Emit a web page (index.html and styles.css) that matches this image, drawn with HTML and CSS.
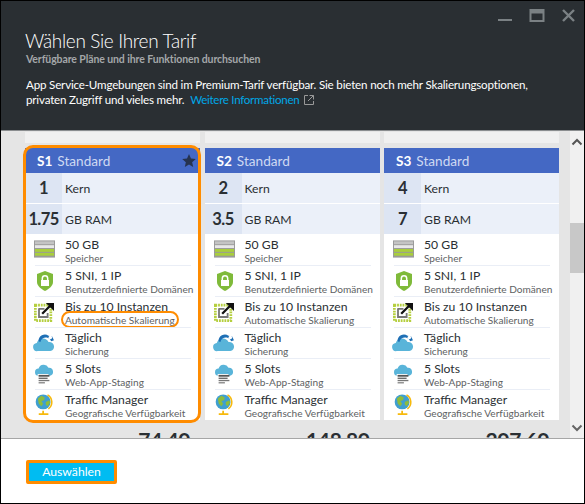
FILE: index.html
```html
<!DOCTYPE html>
<html lang="de">
<head>
<meta charset="utf-8">
<title>Wählen Sie Ihren Tarif</title>
<link rel="stylesheet" href="styles.css">
</head>
<body>
<svg class="defs" width="0" height="0" aria-hidden="true">
  <symbol id="i-disk" viewBox="0 0 22 18">
    <rect width="22" height="18" fill="#9a9a9a"/>
    <rect x="1" y="1" width="20" height="3" fill="#c4c4c4"/>
    <rect x="1" y="5" width="20" height="3" fill="#e8e8e8"/>
    <rect x="1" y="9" width="20" height="3" fill="#a9ce3c"/>
    <rect x="1" y="13" width="20" height="3" fill="#a9ce3c"/>
  </symbol>
  <symbol id="i-shield" viewBox="0 0 18 20">
    <path d="M9 0l8 3v8c0 4-4 7-8 9-4-2-8-5-8-9V3z" fill="#7fba3a"/>
    <path d="M6.300 9V7.500a2.700 2.700 0 0 1 5.400 0V9" fill="none" stroke="#fff" stroke-width="1.500"/>
    <rect x="5" y="9" width="8" height="6" fill="#fff"/>
  </symbol>
  <symbol id="i-scale" viewBox="0 0 22 22">
    <rect x="1.500" y="3.500" width="17" height="17" fill="none" stroke="#b5cf3f" stroke-width="3" stroke-dasharray="2 1"/>
    <path d="M5.500 7.500h6M5.500 7v9.500h9.500V12" fill="none" stroke="#777" stroke-width="2"/>
    <path d="M9 13L20 2" stroke="#111" stroke-width="2.500"/>
    <path d="M13 1h9v9z" fill="#111"/>
  </symbol>
  <symbol id="i-backup" viewBox="0 0 24 21">
    <path d="M5 20a4.500 4.500 0 0 1-1-9 7 7 0 0 1 13-1 5 5 0 0 1 2 10z" fill="#59b4d9"/>
    <path d="M6 9a7 7 0 0 1 11-6l4 1 2 4-3 1-2-3-3-1a6 6 0 0 0-7 5z" fill="#1e6fb5"/>
    <circle cx="19" cy="5" r="2" fill="#fff"/>
  </symbol>
  <symbol id="i-slots" viewBox="0 0 20 22">
    <path d="M4 13a4 4 0 0 1 0-8 6 6 0 0 1 11-1 4.500 4.500 0 0 1 1 9z" fill="#59b4d9"/>
    <rect x="3" y="11" width="12" height="2" fill="#fff"/>
    <rect x="4" y="12" width="12" height="2" fill="#555"/>
    <rect x="4" y="15" width="10" height="1.500" fill="#666"/>
    <rect x="4" y="17.500" width="12" height="1.500" fill="#777"/>
    <rect x="4" y="20" width="7" height="1.500" fill="#888"/>
  </symbol>
  <symbol id="i-globe" viewBox="0 0 20 24">
    <circle cx="9" cy="9" r="8.500" fill="#3f9fd0"/>
    <path d="M3 5l4-3 4 2-1 3-3 1 2 3-2 3-3-3zM12 9l4-2 1 3-3 4-2-2z" fill="#8dbb3e"/>
    <path d="M14 1a9.500 9.500 0 0 1 1 16" fill="none" stroke="#f7b90c" stroke-width="1.800"/>
    <path d="M9 19v3M4 23h11" stroke="#f7b90c" stroke-width="2"/>
  </symbol>
</svg>
<main class="window">
  <header class="head">
    <div class="controls">
      <svg class="ctl" width="78" height="14" viewBox="0 0 78 14" aria-hidden="true">
        <path d="M0 11h14" stroke="#7b8184" stroke-width="2"/>
        <path d="M32.500 1h13v11h-13z" fill="none" stroke="#7b8184" stroke-width="2"/>
        <path d="M32 3h14" stroke="#7b8184" stroke-width="3"/>
        <path d="M65 1l11 11M76 1L65 12" stroke="#7b8184" stroke-width="2.400"/>
      </svg>
    </div>
    <h1 class="title">Wählen Sie Ihren Tarif</h1>
    <p class="subtitle">Verfügbare Pläne und ihre Funktionen durchsuchen</p>
    <p class="intro">App Service-Umgebungen sind im Premium-Tarif verfügbar. Sie bieten noch mehr Skalierungsoptionen, privaten Zugriff und vieles mehr. <a class="link">Weitere Informationen</a>
      <svg class="ext" width="10" height="10" viewBox="0 0 10 10" aria-hidden="true"><path d="M4 .5H.5v9h9V6M5.500.5h4v4M9.500.5L4 6" fill="none" stroke="#999"/></svg>
    </p>
  </header>
  <section class="body">
    <div class="plans">
      <article class="plan selected">
        <div class="band"></div>
        <div class="card">
          <div class="plan-head"><b>S1</b><span>Standard</span>
            <svg class="star" width="14" height="13" viewBox="0 0 24 23" aria-hidden="true"><path d="M12 0l3.500 8 8.500.8-6.400 5.700L19.400 23 12 18.500 4.600 23l1.800-8.500L0 8.800 8.500 8z" fill="#26334f"/></svg>
          </div>
          <div class="spec"><b>1</b><span>Kern</span></div>
          <div class="spec"><b>1.75</b><span>GB RAM</span></div>
          <ul class="features">
            <li><svg class="ico"><use href="#i-disk" x="4" y="6" width="21" height="18"/></svg><div><strong>50 GB</strong><small>Speicher</small></div></li>
            <li><svg class="ico"><use href="#i-shield" x="6" y="6" width="18" height="20"/></svg><div><strong>5 SNI, 1 IP</strong><small>Benutzerdefinierte Domänen</small></div></li>
            <li><svg class="ico"><use href="#i-scale" x="4" y="6" width="20" height="20"/></svg><div><strong>Bis zu 10 Instanzen</strong><small class="ring">Automatische Skalierung</small></div></li>
            <li><svg class="ico"><use href="#i-backup" x="3" y="6" width="22" height="19"/></svg><div><strong>Täglich</strong><small>Sicherung</small></div></li>
            <li><svg class="ico"><use href="#i-slots" x="5" y="6" width="18" height="20"/></svg><div><strong>5 Slots</strong><small>Web-App-Staging</small></div></li>
            <li><svg class="ico"><use href="#i-globe" x="5" y="5" width="18" height="21"/></svg><div><strong>Traffic Manager</strong><small>Geografische Verfügbarkeit</small></div></li>
          </ul>
        </div>
        <div class="price">74,40</div>
      </article>
      <article class="plan">
        <div class="band"></div>
        <div class="card">
          <div class="plan-head"><b>S2</b><span>Standard</span></div>
          <div class="spec"><b>2</b><span>Kern</span></div>
          <div class="spec"><b>3.5</b><span>GB RAM</span></div>
          <ul class="features">
            <li><svg class="ico"><use href="#i-disk" x="4" y="6" width="21" height="18"/></svg><div><strong>50 GB</strong><small>Speicher</small></div></li>
            <li><svg class="ico"><use href="#i-shield" x="6" y="6" width="18" height="20"/></svg><div><strong>5 SNI, 1 IP</strong><small>Benutzerdefinierte Domänen</small></div></li>
            <li><svg class="ico"><use href="#i-scale" x="4" y="6" width="20" height="20"/></svg><div><strong>Bis zu 10 Instanzen</strong><small>Automatische Skalierung</small></div></li>
            <li><svg class="ico"><use href="#i-backup" x="3" y="6" width="22" height="19"/></svg><div><strong>Täglich</strong><small>Sicherung</small></div></li>
            <li><svg class="ico"><use href="#i-slots" x="5" y="6" width="18" height="20"/></svg><div><strong>5 Slots</strong><small>Web-App-Staging</small></div></li>
            <li><svg class="ico"><use href="#i-globe" x="5" y="5" width="18" height="21"/></svg><div><strong>Traffic Manager</strong><small>Geografische Verfügbarkeit</small></div></li>
          </ul>
        </div>
        <div class="price">148,80</div>
      </article>
      <article class="plan">
        <div class="band"></div>
        <div class="card">
          <div class="plan-head"><b>S3</b><span>Standard</span></div>
          <div class="spec"><b>4</b><span>Kern</span></div>
          <div class="spec"><b>7</b><span>GB RAM</span></div>
          <ul class="features">
            <li><svg class="ico"><use href="#i-disk" x="4" y="6" width="21" height="18"/></svg><div><strong>50 GB</strong><small>Speicher</small></div></li>
            <li><svg class="ico"><use href="#i-shield" x="6" y="6" width="18" height="20"/></svg><div><strong>5 SNI, 1 IP</strong><small>Benutzerdefinierte Domänen</small></div></li>
            <li><svg class="ico"><use href="#i-scale" x="4" y="6" width="20" height="20"/></svg><div><strong>Bis zu 10 Instanzen</strong><small>Automatische Skalierung</small></div></li>
            <li><svg class="ico"><use href="#i-backup" x="3" y="6" width="22" height="19"/></svg><div><strong>Täglich</strong><small>Sicherung</small></div></li>
            <li><svg class="ico"><use href="#i-slots" x="5" y="6" width="18" height="20"/></svg><div><strong>5 Slots</strong><small>Web-App-Staging</small></div></li>
            <li><svg class="ico"><use href="#i-globe" x="5" y="5" width="18" height="21"/></svg><div><strong>Traffic Manager</strong><small>Geografische Verfügbarkeit</small></div></li>
          </ul>
        </div>
        <div class="price">207,60</div>
      </article>
    </div>
    <div class="scrollbar">
      <svg class="arrow" width="14" height="8" viewBox="0 0 14 8" aria-hidden="true"><path d="M2.500 6.500L7 2l4.500 4.500" fill="none" stroke="#555" stroke-width="2"/></svg>
      <div class="thumb"></div>
      <svg class="arrow down" width="14" height="8" viewBox="0 0 14 8" aria-hidden="true"><path d="M2.500 1.500L7 6l4.500-4.500" fill="none" stroke="#666" stroke-width="2"/></svg>
    </div>
  </section>
  <footer class="foot">
    <button class="select" type="button">Auswählen</button>
  </footer>
</main>
</body>
</html>
```

FILE: styles.css
```css
* { box-sizing: border-box; }
html, body { margin: 0; padding: 0; }
body { font-family: "Lato", "Open Sans", sans-serif; color: #2a2f33; background: #000; }
.defs { position: absolute; }
.window { width: 585px; height: 504px; border: 1px solid #000; display: flex; flex-direction: column; background: #fff; overflow: hidden; }

.head { height: 130px; flex: none; background: #2a2f33; padding: 27px 25px 0 24px; color: #fff; position: relative; border-bottom: 1px solid #8a8d8f; }
.controls { position: absolute; top: 8px; right: 8px; line-height: 0; }
.title { margin: 0; font-size: 19px; line-height: 26px; font-weight: 300; letter-spacing: -.35px; }
.subtitle { margin: -1px 0 0 1px; font-size: 10.500px; line-height: 13px; font-weight: 700; color: #a4a7a9; letter-spacing: -.1px; }
.intro { margin: 11px 0 0 1px; font-size: 11.600px; line-height: 15px; width: 510px; letter-spacing: -.18px; }
.link { color: #00a7e6; margin-left: 3px; letter-spacing: -.3px; }
.ext { margin-left: 2px; vertical-align: -1px; }

.body { flex: 1; min-height: 0; display: flex; background: #e5e5e5; overflow: hidden; padding-left: 24px; }
.plans { display: grid; grid-template-columns: repeat(3, 175px); column-gap: 4.500px; align-content: start; width: 545px; }
.band { height: 11px; background: #f0f0f0; margin: 1px 0 5px; }
.card { background: #fff; position: relative; }
.plan.selected .card::after { content: ""; position: absolute; inset: -3px -1px -3px -2px; border: 3px solid #ff8c00; border-radius: 10px; pointer-events: none; }
.plan-head { height: 25px; background: #4468c4; display: flex; align-items: center; padding-left: 12px; color: #cfd9f2; font-size: 13.600px; position: relative; }
.plan-head b { color: #fff; font-weight: 700; margin-right: 5px; }
.star { position: absolute; right: 4px; top: 6px; }
.spec { height: 30px; margin-bottom: 1px; display: flex; background: #ebf0f9; align-items: center; font-size: 12.200px; }
.spec:nth-of-type(3) { margin-bottom: 0; }
.spec b { width: 37px; height: 100%; background: #dde5f3; display: flex; align-items: center; justify-content: center; font-size: 16.500px; letter-spacing: -.6px; font-weight: 700; margin-right: 3px; }
.features { list-style: none; margin: 0; padding: 0 9px 0 0; }
.features li { height: 31px; display: flex; position: relative; }
.features li + li::before { content: ""; position: absolute; left: 10px; right: 0; top: 0; height: 1px; background: #eaeef6; }
.ico { width: 30px; height: 30px; flex: none; margin-left: 5px; margin-right: 5px; }
.features strong { display: block; font-weight: 400; font-size: 12.200px; line-height: 15px; margin-top: 3px; white-space: nowrap; }
.features small { display: block; font-size: 10.100px; line-height: 12px; color: #5d6163; white-space: nowrap; }
.features small.ring { position: relative; }
.features small.ring::after { content: ""; position: absolute; left: -4px; top: -3px; width: 114px; height: 13px; border: 2px solid #ff8c00; border-radius: 9px; }
.price { text-align: right; padding-right: 10px; font-size: 21px; font-weight: 700; line-height: 26px; margin-top: 7px; letter-spacing: -.4px; }

.scrollbar { width: 14px; margin-left: 1px; background: #f0f0f0; display: flex; flex-direction: column; align-items: center; padding-top: 7px; }
.arrow { flex: none; }
.thumb { width: 100%; height: 50px; background: #c8c8c8; margin-top: 77px; flex: none; }
.arrow.down { margin-top: auto; margin-bottom: 6px; }

.foot { height: 65px; flex: none; background: #fff; border-top: 1px solid #a6a6a6; padding: 21px 0 0 25px; }
.select { display: block; width: 91px; height: 24px; padding: 0; border: 3px solid #ff8c00; border-radius: 2px; background: #00bcf2; color: #fff; font-family: inherit; font-size: 12.200px; line-height: 16px; }
```
